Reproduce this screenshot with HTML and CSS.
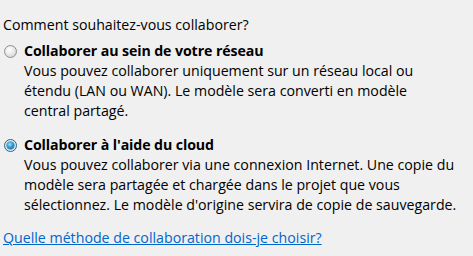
FILE: index.html
```html
<!DOCTYPE html>
<html lang="fr">
<head>
<meta charset="utf-8">
<link rel="stylesheet" href="styles.css">
</head>
<body>
<main class="panel">
  <p class="question">Comment souhaitez-vous collaborer?</p>
  <div class="option">
    <span class="radio"></span>
    <div class="body">
      <div class="title">Collaborer au sein de votre réseau</div>
      <div class="desc">Vous pouvez collaborer uniquement sur un réseau local ou<br>étendu (LAN ou WAN). Le modèle sera converti en modèle<br>central partagé.</div>
    </div>
  </div>
  <div class="option second">
    <span class="radio checked"></span>
    <div class="body">
      <div class="title">Collaborer à l'aide du cloud</div>
      <div class="desc">Vous pouvez collaborer via une connexion Internet. Une copie du<br>modèle sera partagée et chargée dans le projet que vous<br>sélectionnez. Le modèle d'origine servira de copie de sauvegarde.</div>
    </div>
  </div>
  <a class="help" href="#">Quelle méthode de collaboration dois-je choisir?</a>
</main>
</body>
</html>
```

FILE: styles.css
```css
html, body {
  margin: 0;
  padding: 0;
  background: #f0f0f0;
}
.panel {
  width: 473px;
  height: 256px;
  box-sizing: border-box;
  padding: 15px 0 0 3px;
  font-family: "Open Sans", "Noto Sans", sans-serif;
  font-size: 14.2px;
  line-height: 20px;
  color: #000;
  display: flex;
  flex-direction: column;
  align-items: flex-start;
  white-space: nowrap;
}
.question {
  margin: 0 0 6px 0;
}
.option {
  display: flex;
  align-items: flex-start;
  gap: 7px;
  padding-left: 1px;
}
.second {
  margin-top: 14px;
}
.title {
  font-weight: bold;
  letter-spacing: -0.1px;
}
.radio {
  width: 13px;
  height: 13px;
  margin-top: 4px;
  box-sizing: border-box;
  border-radius: 50%;
  border: 1px solid #8e8f8f;
  background: radial-gradient(circle at 40% 35%, #ffffff 0%, #eaeaea 45%, #c9c9c9 100%);
  display: flex;
  align-items: center;
  justify-content: center;
  flex: none;
}
.radio.checked {
  border-color: #2c628b;
  background: radial-gradient(circle at 50% 50%, #e9f4fb 0%, #d4e8f5 100%);
}
.radio.checked::after {
  content: "";
  width: 7px;
  height: 7px;
  border-radius: 50%;
  background: radial-gradient(circle at 40% 35%, #a6e4ff 0%, #2a9fd8 45%, #0f4f8a 100%);
  box-shadow: 0 0 0 0.5px #1b5b8c;
}
.help {
  margin-top: 13px;
  color: #0066cc;
  text-decoration: underline;
}
```
